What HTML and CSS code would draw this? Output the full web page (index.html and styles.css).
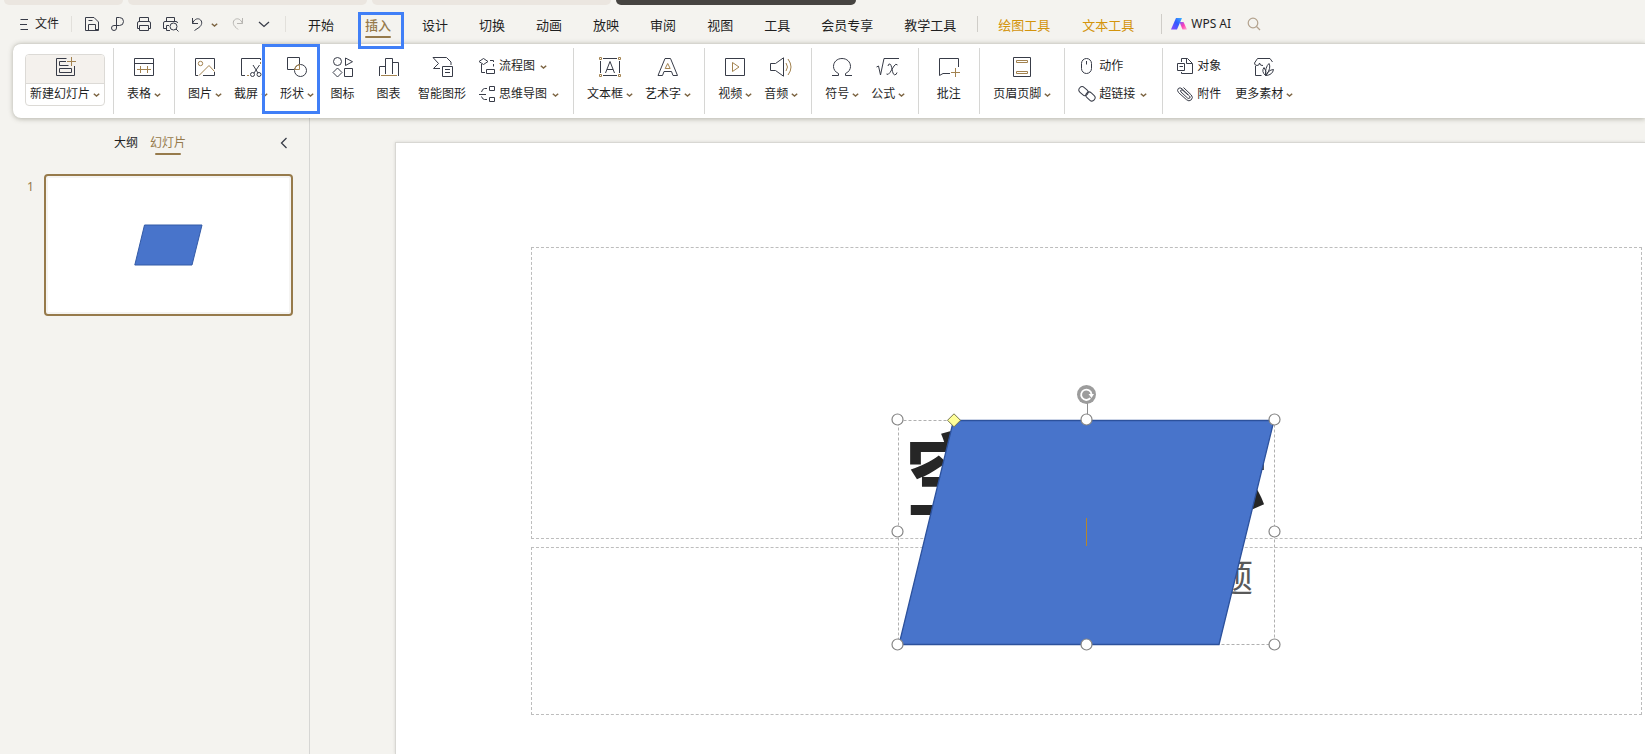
FILE: index.html
```html
<!DOCTYPE html>
<html lang="zh-CN">
<head>
<meta charset="utf-8">
<title>WPS 演示</title>
<link rel="stylesheet" href="styles.css">
</head>
<body>
<svg class="defs" width="0" height="0" aria-hidden="true">
  <symbol id="caret" viewBox="0 0 7 4"><path d="M.8 .7L3.5 3L6.2 .7" fill="none" stroke="#7d6543" stroke-width="1.5"/></symbol>
</svg>
<div class="app">
  <div class="doc-tabs">
    <span class="doc-tab first"></span>
    <span class="doc-tab"></span>
    <span class="doc-tab"></span>
    <span class="doc-tab current"></span>
  </div>

  <header class="menubar">
    <button class="file"><svg width="10" height="12" viewBox="0 0 10 12"><path d="M.5 1.5H8M0 6.5H7M.5 11.5H8"/></svg>文件</button>
    <span class="bar-sep faint"></span>
    <div class="quick">
      <button aria-label="保存"><svg width="16" height="16" viewBox="0 0 16 16"><path d="M1.500 1.500H10L14.500 6V13.500H12M1.500 1.500V14.500H14.500V12M4.500 14.500V8.500H11.500V14.500M4.500 4.500H8.500"/></svg></button>
      <button aria-label="输出为PDF"><svg width="16" height="16" viewBox="0 0 16 16"><path d="M6.500 7V1.500H9.500A4 4 0 0 1 9.500 9.500H4A2.500 2.500 0 1 0 6.500 12V6"/></svg></button>
      <button aria-label="打印"><svg width="16" height="16" viewBox="0 0 16 16"><path d="M3.500 5V1.500H12.500V5M3.500 12.500H1.500V7Q1.500 5.500 3 5.500H13Q14.500 5.500 14.500 7V12.500H12.500M3.500 9.500H12.500V14.500H3.500Z"/></svg></button>
      <button aria-label="打印预览"><svg width="16" height="16" viewBox="0 0 16 16"><path d="M4.500 5V1.500H12.500V5M4 12.500H1.500V7Q1.500 5.500 3 5.500H14Q15.500 5.500 15.500 7M4.500 14.500V9.500H7M4.500 14.500H8"/><circle cx="11.500" cy="10.500" r="3.500"/><path d="M14 13L16.500 15.500"/></svg></button>
      <button aria-label="撤销"><svg width="16" height="16" viewBox="0 0 16 16"><path d="M4.500 2V7.500H10M4.500 7.500C6 3.500 9 2 11.500 3.200C15 5 14 9.500 11 11.500L6.500 14.500"/></svg></button>
      <svg class="caret" width="7" height="4"><use href="#caret"/></svg>
      <button class="redo" aria-label="恢复"><svg width="16" height="16" viewBox="0 0 16 16"><path d="M13.500 2V7.500H8M13.500 7.500C12 3.500 9 2 6.500 3.200C3 5 4 9.500 7 11.500L9 13.500"/></svg></button>
      <button aria-label="更多"><svg width="16" height="16" viewBox="0 0 16 16"><path d="M4 6L9 10.500L14 6" stroke-width="1.300"/></svg></button>
    </div>
    <span class="bar-sep faint"></span>
    <nav class="tabs">
      <button>开始</button>
      <button class="on marked">插入</button>
      <button>设计</button>
      <button>切换</button>
      <button>动画</button>
      <button>放映</button>
      <button>审阅</button>
      <button>视图</button>
      <button>工具</button>
      <button>会员专享</button>
      <button>教学工具</button>
    </nav>
    <span class="bar-sep short"></span>
    <nav class="tabs context">
      <button>绘图工具</button>
      <button>文本工具</button>
    </nav>
    <span class="bar-sep"></span>
    <button class="ai"><svg width="16" height="12" viewBox="0 0 16 12">
      <defs>
        <linearGradient id="g1" x1="0" y1="1" x2="1" y2="0"><stop offset="0" stop-color="#8a4bff"/><stop offset=".55" stop-color="#2f5bff"/><stop offset="1" stop-color="#39b4ff"/></linearGradient>
        <linearGradient id="g2" x1="0" y1="0" x2="1" y2="1"><stop offset="0" stop-color="#7a5cff"/><stop offset=".5" stop-color="#ff3fb4"/><stop offset="1" stop-color="#ffb0d0"/></linearGradient>
      </defs>
      <path d="M5 0H11L6 11.500H0Z" fill="url(#g1)" stroke="none"/><path d="M8.500 4H12.500L16 11.500H11.500Z" fill="url(#g2)" stroke="none"/></svg>WPS AI</button>
    <button class="search" aria-label="搜索"><svg width="14" height="14" viewBox="0 0 14 14"><circle cx="6" cy="6" r="4.800"/><path d="M9.500 9.500L13 13"/></svg></button>
  </header>

  <section class="ribbon" aria-label="插入">
    <button class="new-slide">
      <span class="new-top"><svg width="21" height="21" viewBox="0 0 21 21"><path d="M11.500 1.500H1.500V18.500H19.500V9M11 4.500H4.500V8.500H13.500M4.500 11.500H16.500V15.500H4.500Z"/><path class="gold" d="M12 4.500H21M16.500 0V9"/></svg></span>
      <span class="label">新建幻灯片<svg class="caret" width="7" height="4"><use href="#caret"/></svg></span>
    </button>
    <div class="group">
      <button class="item"><svg width="21" height="21" viewBox="0 0 21 21"><path d="M1.500 1.500H20.500V18.500H1.500ZM1.500 6.500H20.500"/><path class="gold" d="M4 12.500H18M7.500 9V16M14.500 9V16"/></svg>
        <span class="label">表格<svg class="caret" width="7" height="4"><use href="#caret"/></svg></span></button>
    </div>
    <div class="group">
      <button class="item"><svg width="21" height="21" viewBox="0 0 21 21"><path d="M4 18.500H1.500V1.500H20.500V12M20.500 15V18.500H9"/><circle class="gold" cx="6.500" cy="6.500" r="2.200"/><path class="gold" d="M5 18.500L15 8.500L20.500 14.500"/></svg>
        <span class="label">图片<svg class="caret" width="7" height="4"><use href="#caret"/></svg></span></button>
      <button class="item"><svg width="21" height="21" viewBox="0 0 21 21"><path d="M5 18.500H1.500V1.500H20.500V3"/><path class="gold" d="M20.500 5V7M7 18.500H9"/><path d="M13 8L18 16M19.500 8L14 16"/><circle cx="12.500" cy="17.500" r="2"/><circle cx="19" cy="17.500" r="2"/></svg>
        <span class="label">截屏<svg class="caret" width="7" height="4"><use href="#caret"/></svg></span></button>
      <button class="item marked"><svg width="21" height="21" viewBox="0 0 21 21"><circle cx="14.500" cy="13.500" r="6"/><path d="M8.500 12.500H1.500V.5H13.500V7.500"/><path class="gold" d="M8.500 12.500H13.500V7.500A6 6 0 0 0 8.500 12.500Z"/></svg>
        <span class="label">形状<svg class="caret" width="7" height="4"><use href="#caret"/></svg></span></button>
      <button class="item"><svg width="21" height="21" viewBox="0 0 21 21"><circle cx="5.500" cy="4.500" r="4"/><path d="M13.500 1V8.500L20.500 4.700ZM5.500 11L10 15.500L5.500 20L1 15.500ZM12.500 11.500H20.500V19.500H12.500Z"/></svg>
        <span class="label">图标</span></button>
      <button class="item"><svg width="21" height="21" viewBox="0 0 21 21"><path d="M1.500 19V9.500H7.500M7.500 17V1.500H14.500V17M14.500 5.500H20.500V19"/><path class="gold" d="M3 18.500H19"/></svg>
        <span class="label">图表</span></button>
      <button class="item"><svg width="21" height="21" viewBox="0 0 21 21"><path d="M8 11.500H1.500L6.500 6.500L1 .5H14.500L19 5V8M10.500 9.500H20.500V19.500H10.500ZM13 12.500H18M13 15.500H18"/></svg>
        <span class="label">智能图形</span></button>
      <div class="stack">
        <button class="row"><svg width="16" height="16" viewBox="0 0 16 16"><path d="M4.500 .5L9 3.500L4.500 6.500L0 3.500ZM7.500 11.500H15.500V15.500H7.500ZM2.500 6V14.500H6M11 2.500H14.500V4M14.500 6V8.500"/></svg>流程图<svg class="caret" width="7" height="4"><use href="#caret"/></svg></button>
        <button class="row"><svg width="16" height="16" viewBox="0 0 16 16"><path d="M10.500 .5H15.500V4.500H10.500ZM10.500 11.500H15.500V15.500H10.500ZM0 8.500H7M8 2.500H5.500Q3.500 2.500 2.500 6M8 13.500H5.500Q3.500 13.500 2.500 10.500"/></svg>思维导图<svg class="caret" width="7" height="4"><use href="#caret"/></svg></button>
      </div>
    </div>
    <div class="group">
      <button class="item"><svg width="22" height="21" viewBox="0 0 22 21"><path d="M4 1.500H18M4 18.500H18M1.500 4V16M20.500 4V16M6.500 16L11 4.500L15.500 16M8 12.500H14"/><path class="gold" d="M.5 .5H2.500V2.500H.5ZM19.500 .5H21.500V2.500H19.500ZM.5 17.500H2.500V19.500H.5ZM19.500 17.500H21.500V19.500H19.500Z"/></svg>
        <span class="label">文本框<svg class="caret" width="7" height="4"><use href="#caret"/></svg></span></button>
      <button class="item"><svg width="21" height="21" viewBox="0 0 21 21"><path d="M8 1.500H13.500L20.500 18.500H16L14.500 14.500H7L5.500 18.500H1Z"/><path class="gold" d="M10.700 6.500L13.200 11.500H8.200Z"/></svg>
        <span class="label">艺术字<svg class="caret" width="7" height="4"><use href="#caret"/></svg></span></button>
    </div>
    <div class="group">
      <button class="item"><svg width="21" height="21" viewBox="0 0 21 21"><path d="M1.500 1.500H20.500V18.500H1.500Z"/><path class="gold" d="M8.500 5.500V14.500L15 10Z"/></svg>
        <span class="label">视频<svg class="caret" width="7" height="4"><use href="#caret"/></svg></span></button>
      <button class="item"><svg width="23" height="21" viewBox="0 0 23 21"><path d="M1.500 6.500H6.500L14.500 .8V19.200L6.500 13.500H1.500Z"/><path class="gold" d="M17 6Q20 10 17 14M19 2Q25 10 19 18"/></svg>
        <span class="label">音频<svg class="caret" width="7" height="4"><use href="#caret"/></svg></span></button>
    </div>
    <div class="group">
      <button class="item"><svg width="21" height="21" viewBox="0 0 21 21"><path d="M1 18.500H7.500V16.500C4 15 2.500 12 2.500 9.500C2.500 5 6 1.500 11 1.500S19.500 5 19.500 9.500C19.500 12 18 15 14.500 16.500V18.500H21"/></svg>
        <span class="label">符号<svg class="caret" width="7" height="4"><use href="#caret"/></svg></span></button>
      <button class="item"><svg width="23" height="21" viewBox="0 0 23 21"><path d="M.5 10L2.500 9L4.500 18L8 1.500H23M12 9Q12.500 6.500 14 7C16 7.500 16 17.500 18.500 17.800Q20.500 18 21 15.500M21.500 8Q20 6 18 9L14 15.500Q12 18.500 10.500 17"/></svg>
        <span class="label">公式<svg class="caret" width="7" height="4"><use href="#caret"/></svg></span></button>
    </div>
    <div class="group">
      <button class="item"><svg width="21" height="21" viewBox="0 0 21 21"><path d="M12 16.500H5L1.500 18.500V1.500H20.500V10"/><path class="gold" d="M13 15.500H22M17.500 11V20"/></svg>
        <span class="label">批注</span></button>
    </div>
    <div class="group">
      <button class="item"><svg width="21" height="21" viewBox="0 0 21 21"><path d="M2.500 .5H19.500V19.500H2.500Z"/><path class="gold" d="M5.500 3.500H16.500V5.500H5.500ZM5.500 14.500H16.500V16.500H5.500Z"/></svg>
        <span class="label">页眉页脚<svg class="caret" width="7" height="4"><use href="#caret"/></svg></span></button>
    </div>
    <div class="group wide">
      <div class="stack">
        <button class="row"><svg width="16" height="16" viewBox="0 0 16 16"><rect x="2.500" y=".5" width="10" height="15" rx="5"/><path d="M7.500 3V6.500"/></svg>动作</button>
        <button class="row"><svg width="16" height="16" viewBox="0 0 16 16"><rect x="-.5" y="1.900" width="10" height="6.400" rx="3.200" transform="rotate(42 4.500 5.100)"/><rect x="6.500" y="7.300" width="10" height="6.400" rx="3.200" transform="rotate(42 11.500 10.500)"/></svg>超链接<svg class="caret" width="7" height="4"><use href="#caret"/></svg></button>
      </div>
    </div>
    <div class="group wide">
      <div class="stack">
        <button class="row"><svg width="16" height="16" viewBox="0 0 16 16"><path d="M4.500 4V.5H10.500L15.500 5.500V15.500H4.500V14M9.500 .5V5.500H15M.5 5.500H7.500V12.500H.5ZM2.500 8.500H6"/></svg>对象</button>
        <button class="row"><svg width="16" height="16" viewBox="0 0 16 16"><path d="M4 6L10.500 12Q12 13 12.800 12Q13.600 11 12.500 10L5 2.800Q3 1 1.300 2.500Q-.3 4.500 1.500 6.500L9.500 13.700Q12 16 14.300 13.800Q16.500 11.500 14.300 9L6.500 1.500M4 6Q3 4.700 4 4Q5 3.500 6 4.500L11 9"/></svg>附件</button>
      </div>
      <button class="item"><svg width="22" height="21" viewBox="0 0 22 21"><path d="M19.500 5L17 1.500H4.500L1.500 6Q1.500 8.500 4 8.500Q6.500 8.500 6.500 6Q7 9 10 8.500M2.500 9V18.500H8.500M12.500 18.500Q8 14.500 11 10.500Q14 14 12.500 18.500Q12 10 16 6.500Q18.500 11 13 18.500Q15 13 20.500 12.500Q19.500 18 13 18.500"/></svg>
        <span class="label">更多素材<svg class="caret" width="7" height="4"><use href="#caret"/></svg></span></button>
    </div>
  </section>

  <main class="body">
    <aside class="side">
      <div class="side-head">
        <button>大纲</button>
        <button class="on">幻灯片</button>
        <button class="fold" aria-label="收起"><svg width="8" height="12" viewBox="0 0 8 12"><path d="M6.500 1L1.500 6L6.500 11" stroke-width="1.300"/></svg></button>
      </div>
      <div class="thumb-row">
        <span class="num">1</span>
        <button class="thumb" aria-label="幻灯片 1"><svg width="69" height="42" viewBox="0 0 69 42"><path d="M10.500 1H68L58 41H.8Z" fill="#4874cb" stroke="#335aa6"/></svg></button>
      </div>
    </aside>
    <div class="stage">
      <div class="slide">
        <div class="layout">
          <div class="holder title"><h1>空白演示</h1></div>
          <div class="holder subtitle"><p>单击此处输入副标题</p></div>
          <div class="selection">
            <svg width="401" height="276" viewBox="0 0 401 276">
              <path class="frame" d="M12.500 39.500H388.500V263.500H12.500Z"/>
              <path d="M67.500 39.500H388L333 263.500H13Z" fill="#4874cb" stroke="#2c519c" stroke-width="1.300"/>
              <path d="M201.500 22V34" stroke="#8c8c8c"/>
              <path d="M200.500 137V165" stroke="#b5862b"/>
              <circle cx="200.500" cy="13.500" r="9.500" fill="#9c9c9c"/>
              <path d="M204.300 17.200A5.200 5.200 0 1 1 205.500 13" fill="none" stroke="#fff" stroke-width="1.800"/>
              <path d="M202.500 13H208L205.500 17Z" fill="#fff"/>
              <g class="handles">
                <circle cx="11.500" cy="38.500" r="5.500"/><circle cx="200.500" cy="38.500" r="5.500"/><circle cx="388.500" cy="38.500" r="5.500"/>
                <circle cx="11.500" cy="150.500" r="5.500"/><circle cx="388.500" cy="150.500" r="5.500"/>
                <circle cx="11.500" cy="263.500" r="5.500"/><circle cx="200.500" cy="263.500" r="5.500"/><circle cx="388.500" cy="263.500" r="5.500"/>
              </g>
              <path d="M68 32.800L74.500 39.300L68 45.800L61.500 39.300Z" fill="#ffff99" stroke="#77774f"/>
            </svg>
          </div>
        </div>
      </div>
    </div>
  </main>
</div>
</body>
</html>
```

FILE: styles.css
```css
* { box-sizing: border-box; }

body {
  margin: 0;
  background: #f4f3ef;
  color: #1f1f1f;
  font: 12px/16px "Noto Sans", "Noto Sans CJK SC", sans-serif;
  overflow: hidden;
}

button {
  margin: 0;
  padding: 0;
  border: 0;
  background: none;
  color: inherit;
  font: inherit;
  white-space: nowrap;
}

svg { display: block; flex: none; overflow: visible; }
.defs { position: absolute; }
button svg { fill: none; stroke: #383c48; stroke-width: 1; }
button svg .gold { stroke: #a2824f; }

.app { display: flex; flex-direction: column; height: 100vh; }

/* document tabs */
.doc-tabs { display: flex; gap: 5px; height: 5px; padding-left: 4px; }
.doc-tab { width: 239px; border-radius: 0 0 6px 6px; background: #ebe6e0; }
.doc-tab.first { width: 119px; }
.doc-tab.current { background: #464441; width: 240px; }

/* menu bar */
.menubar { display: flex; align-items: center; height: 38px; padding-left: 20px; }
.file { display: flex; align-items: center; gap: 5px; }
.bar-sep { width: 1px; height: 20px; background: #cfcdc8; }
.bar-sep.faint { height: 16px; background: #e2e0db; }
.bar-sep.short { height: 16px; }
.file + .bar-sep { margin-left: 12px; }
.quick { display: flex; align-items: center; gap: 10px; padding: 0 14px 0 12px; }
.quick .caret { margin-left: -3px; margin-right: 1px; }
.redo svg { stroke: #b8b6b2; }
.tabs { display: flex; gap: 31px; padding: 1px 21px 0 22px; font-size: 13px; line-height: 20px; }
.tabs button { position: relative; }
.tabs .on { color: #967a4b; font-weight: 500; }
.tabs .on::before {
  content: "";
  position: absolute;
  inset: auto 0 -3px;
  height: 2px;
  border-radius: 1px;
  background: #967a4b;
}
.tabs .marked::after { inset: -3px -13px -14px -7px; }
.tabs.context { gap: 32px; padding: 1px 27px 0 20px; color: #d3940c; }
.ai { display: flex; align-items: center; gap: 4px; padding-left: 9px; }
.search { padding-left: 16px; }
.search svg { stroke: #b3a28d; stroke-width: 1.2; }

/* blue call-out boxes */
.marked { position: relative; }
.marked::after {
  content: "";
  position: absolute;
  z-index: 2;
  border: 3px solid #407ff7;
}
.menubar { position: relative; z-index: 2; }

/* ribbon */
.ribbon {
  position: relative;
  z-index: 1;
  display: flex;
  margin-left: 13px;
  padding: 4px 0 4px 12px;
  border-top: 1px solid #d6d5cf;
  border-radius: 8px 0 0 8px;
  background: #fff;
  box-shadow: 0 1px 5px rgba(60, 60, 40, .35);
}
.new-slide {
  display: flex;
  flex-direction: column;
  align-items: stretch;
  width: 80px;
  height: 52px;
  margin: 6px 8px 0 0;
  border: 1px solid #dcdad6;
  border-radius: 4px;
  overflow: hidden;
}
.new-top {
  display: flex;
  justify-content: center;
  height: 29px;
  padding-top: 2px;
  border-bottom: 1px solid #dcdad6;
  background: #f4f1ed;
}
.new-slide .label { margin: 2px 0 0 4px; }
.label { display: flex; align-items: center; gap: 3px; }
.caret { margin-top: 2px; margin-right: -1px; }
.group {
  display: flex;
  align-items: flex-start;
  gap: 13px;
  height: 66px;
  padding: 9px 14px 0 13px;
  border-left: 1px solid #d6d6d4;
}
.group.wide { padding: 9px 15px 0 14px; }
.item {
  display: flex;
  flex-direction: column;
  align-items: center;
  gap: 8px;
  min-width: 33px;
}
.item.marked::after { inset: -13px -7px -12px -18px; }
.stack { display: flex; flex-direction: column; gap: 12px; padding: 1px 1px 0 0; }
.row { display: flex; align-items: center; gap: 4px; }
.row .caret { margin-left: 1px; }

/* slide list */
.body { display: flex; flex: 1; min-height: 0; }
.side { width: 310px; padding-top: 17px; border-right: 1px solid #d6d6d4; }
.side-head {
  display: flex;
  align-items: center;
  gap: 12px;
  padding: 0 21px 0 114px;
}
.side-head .on { position: relative; color: #967a4b; }
.side-head .on::after {
  content: "";
  position: absolute;
  inset: auto 5px -4px;
  height: 2px;
  border-radius: 1px;
  background: #967a4b;
}
.fold { margin-left: auto; }
.thumb-row { display: flex; gap: 9px; padding: 23px 16px 0 27px; }
.num { width: 8px; padding-top: 5px; color: #967a4b; }
.thumb {
  flex: 1;
  display: flex;
  align-items: center;
  justify-content: center;
  height: 142px;
  border: 2px solid #967a4b;
  border-radius: 4px;
  background: #fff;
  box-shadow: inset 0 0 0 2px #f5f4f2;
}

/* editing canvas */
.stage { flex: 1; display: flex; padding: 24px 0 0 85px; overflow: hidden; }
.slide {
  flex: 1;
  padding: 104px 3px 0 135px;
  border: solid #d8d7d3;
  border-width: 1px 0 0 1px;
  background: #fff;
  box-shadow: 0 0 3px rgba(0, 0, 0, .12);
}
.layout { position: relative; display: flex; flex-direction: column; gap: 8px; }
.holder {
  display: flex;
  justify-content: center;
  border: 1px dashed #bdbdbd;
}
.title { height: 292px; align-items: flex-end; }
.subtitle { height: 168px; align-items: flex-start; }
h1 {
  margin: 0 0 15px;
  color: #262626;
  font: 700 91px/108px "Noto Sans CJK SC", sans-serif;
}
.subtitle p {
  margin: 6px 0 0;
  color: #595959;
  font: 37px/44px "Noto Sans CJK SC", sans-serif;
}
.selection {
  position: absolute;
  inset: 134px 0 auto;
  display: flex;
  justify-content: center;
}
.frame { fill: none; stroke: #b0b0b0; stroke-dasharray: 3 2; }
.handles { fill: #fff; stroke: #858585; stroke-width: 1.2; }
```
